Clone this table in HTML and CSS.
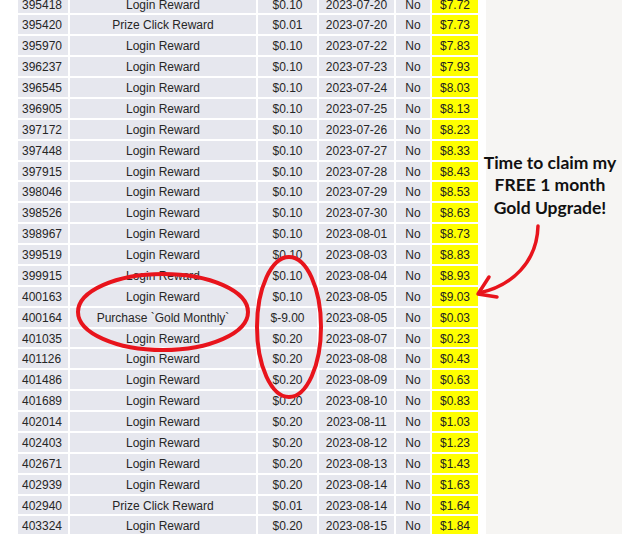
FILE: index.html
```html
<!DOCTYPE html>
<html lang="en">
<head>
<meta charset="utf-8">
<title>Reward history</title>
<link rel="stylesheet" href="styles.css">
</head>
<body>
<div class="page">
  <main class="ledger">
    <div class="row"><div class="cell id">395418</div><div class="cell">Login Reward</div><div class="cell">$0.10</div><div class="cell">2023-07-20</div><div class="cell">No</div><div class="cell bal">$7.72</div></div>
    <div class="row"><div class="cell id">395420</div><div class="cell">Prize Click Reward</div><div class="cell">$0.01</div><div class="cell">2023-07-20</div><div class="cell">No</div><div class="cell bal">$7.73</div></div>
    <div class="row"><div class="cell id">395970</div><div class="cell">Login Reward</div><div class="cell">$0.10</div><div class="cell">2023-07-22</div><div class="cell">No</div><div class="cell bal">$7.83</div></div>
    <div class="row"><div class="cell id">396237</div><div class="cell">Login Reward</div><div class="cell">$0.10</div><div class="cell">2023-07-23</div><div class="cell">No</div><div class="cell bal">$7.93</div></div>
    <div class="row"><div class="cell id">396545</div><div class="cell">Login Reward</div><div class="cell">$0.10</div><div class="cell">2023-07-24</div><div class="cell">No</div><div class="cell bal">$8.03</div></div>
    <div class="row"><div class="cell id">396905</div><div class="cell">Login Reward</div><div class="cell">$0.10</div><div class="cell">2023-07-25</div><div class="cell">No</div><div class="cell bal">$8.13</div></div>
    <div class="row"><div class="cell id">397172</div><div class="cell">Login Reward</div><div class="cell">$0.10</div><div class="cell">2023-07-26</div><div class="cell">No</div><div class="cell bal">$8.23</div></div>
    <div class="row"><div class="cell id">397448</div><div class="cell">Login Reward</div><div class="cell">$0.10</div><div class="cell">2023-07-27</div><div class="cell">No</div><div class="cell bal">$8.33</div></div>
    <div class="row"><div class="cell id">397915</div><div class="cell">Login Reward</div><div class="cell">$0.10</div><div class="cell">2023-07-28</div><div class="cell">No</div><div class="cell bal">$8.43</div></div>
    <div class="row"><div class="cell id">398046</div><div class="cell">Login Reward</div><div class="cell">$0.10</div><div class="cell">2023-07-29</div><div class="cell">No</div><div class="cell bal">$8.53</div></div>
    <div class="row"><div class="cell id">398526</div><div class="cell">Login Reward</div><div class="cell">$0.10</div><div class="cell">2023-07-30</div><div class="cell">No</div><div class="cell bal">$8.63</div></div>
    <div class="row"><div class="cell id">398967</div><div class="cell">Login Reward</div><div class="cell">$0.10</div><div class="cell">2023-08-01</div><div class="cell">No</div><div class="cell bal">$8.73</div></div>
    <div class="row"><div class="cell id">399519</div><div class="cell">Login Reward</div><div class="cell">$0.10</div><div class="cell">2023-08-03</div><div class="cell">No</div><div class="cell bal">$8.83</div></div>
    <div class="row"><div class="cell id">399915</div><div class="cell">Login Reward</div><div class="cell">$0.10</div><div class="cell">2023-08-04</div><div class="cell">No</div><div class="cell bal">$8.93</div></div>
    <div class="row"><div class="cell id">400163</div><div class="cell">Login Reward</div><div class="cell">$0.10</div><div class="cell">2023-08-05</div><div class="cell">No</div><div class="cell bal">$9.03</div></div>
    <div class="row"><div class="cell id">400164</div><div class="cell">Purchase `Gold Monthly`</div><div class="cell">$-9.00</div><div class="cell">2023-08-05</div><div class="cell">No</div><div class="cell bal">$0.03</div></div>
    <div class="row"><div class="cell id">401035</div><div class="cell">Login Reward</div><div class="cell">$0.20</div><div class="cell">2023-08-07</div><div class="cell">No</div><div class="cell bal">$0.23</div></div>
    <div class="row"><div class="cell id">401126</div><div class="cell">Login Reward</div><div class="cell">$0.20</div><div class="cell">2023-08-08</div><div class="cell">No</div><div class="cell bal">$0.43</div></div>
    <div class="row"><div class="cell id">401486</div><div class="cell">Login Reward</div><div class="cell">$0.20</div><div class="cell">2023-08-09</div><div class="cell">No</div><div class="cell bal">$0.63</div></div>
    <div class="row"><div class="cell id">401689</div><div class="cell">Login Reward</div><div class="cell">$0.20</div><div class="cell">2023-08-10</div><div class="cell">No</div><div class="cell bal">$0.83</div></div>
    <div class="row"><div class="cell id">402014</div><div class="cell">Login Reward</div><div class="cell">$0.20</div><div class="cell">2023-08-11</div><div class="cell">No</div><div class="cell bal">$1.03</div></div>
    <div class="row"><div class="cell id">402403</div><div class="cell">Login Reward</div><div class="cell">$0.20</div><div class="cell">2023-08-12</div><div class="cell">No</div><div class="cell bal">$1.23</div></div>
    <div class="row"><div class="cell id">402671</div><div class="cell">Login Reward</div><div class="cell">$0.20</div><div class="cell">2023-08-13</div><div class="cell">No</div><div class="cell bal">$1.43</div></div>
    <div class="row"><div class="cell id">402939</div><div class="cell">Login Reward</div><div class="cell">$0.20</div><div class="cell">2023-08-14</div><div class="cell">No</div><div class="cell bal">$1.63</div></div>
    <div class="row"><div class="cell id">402940</div><div class="cell">Prize Click Reward</div><div class="cell">$0.01</div><div class="cell">2023-08-14</div><div class="cell">No</div><div class="cell bal">$1.64</div></div>
    <div class="row"><div class="cell id">403324</div><div class="cell">Login Reward</div><div class="cell">$0.20</div><div class="cell">2023-08-15</div><div class="cell">No</div><div class="cell bal">$1.84</div></div>
  </main>
  <aside class="note-panel"></aside>
</div>

<svg class="marks" width="624" height="534" viewBox="0 0 624 534" aria-hidden="true">
  <ellipse cx="163" cy="312" rx="85" ry="38" fill="none" stroke="#e8141c" stroke-width="4"/>
  <ellipse cx="289" cy="327" rx="32" ry="70" fill="none" stroke="#e8141c" stroke-width="4"/>
  <path d="M538 226 C537 262 512 286 479 293" fill="none" stroke="#e8141c" stroke-width="3.5" stroke-linecap="round"/>
  <path d="M489 277 L478 294 L497 297" fill="none" stroke="#e8141c" stroke-width="3.5" stroke-linecap="round" stroke-linejoin="round"/>
</svg>

<p class="callout">Time to claim my<br>FREE 1 month<br>Gold Upgrade!</p>
</body>
</html>
```

FILE: styles.css
```css
html, body {
  margin: 0;
  padding: 0;
  background: #ffffff;
}

body {
  width: 624px;
  height: 534px;
  overflow: hidden;
  position: relative;
}

.page {
  display: flex;
  height: 534px;
}

.ledger {
  width: 486px;
  padding-left: 18px;
  box-sizing: border-box;
  display: grid;
  grid-template-columns: 50px 186px 59px 75px 34px 46px;
  grid-auto-rows: 18.88px;
  gap: 2px;
  margin-top: -5.44px;
  align-content: start;
  font-family: "Liberation Sans", Arial, sans-serif;
  font-size: 12px;
  color: #262626;
}

.row {
  display: contents;
}

.cell {
  background: #e6e7ee;
  line-height: 20px;
  text-align: center;
  white-space: nowrap;
  overflow: visible;
}

.cell.id {
  text-align: left;
  padding-left: 4px;
}

.cell.bal {
  background: #ffff00;
  color: #222;
}

.note-panel {
  flex: 1;
  background: #f6f5f3;
  margin-right: 2px;
}

.marks {
  position: absolute;
  left: 0;
  top: 0;
  pointer-events: none;
}

.callout {
  position: absolute;
  left: 476px;
  top: 151.75px;
  width: 148px;
  margin: 0;
  text-align: center;
  font-family: Lato, "Noto Sans", sans-serif;
  font-weight: 700;
  font-size: 17.5px;
  line-height: 22.5px;
  color: #111;
}
```
